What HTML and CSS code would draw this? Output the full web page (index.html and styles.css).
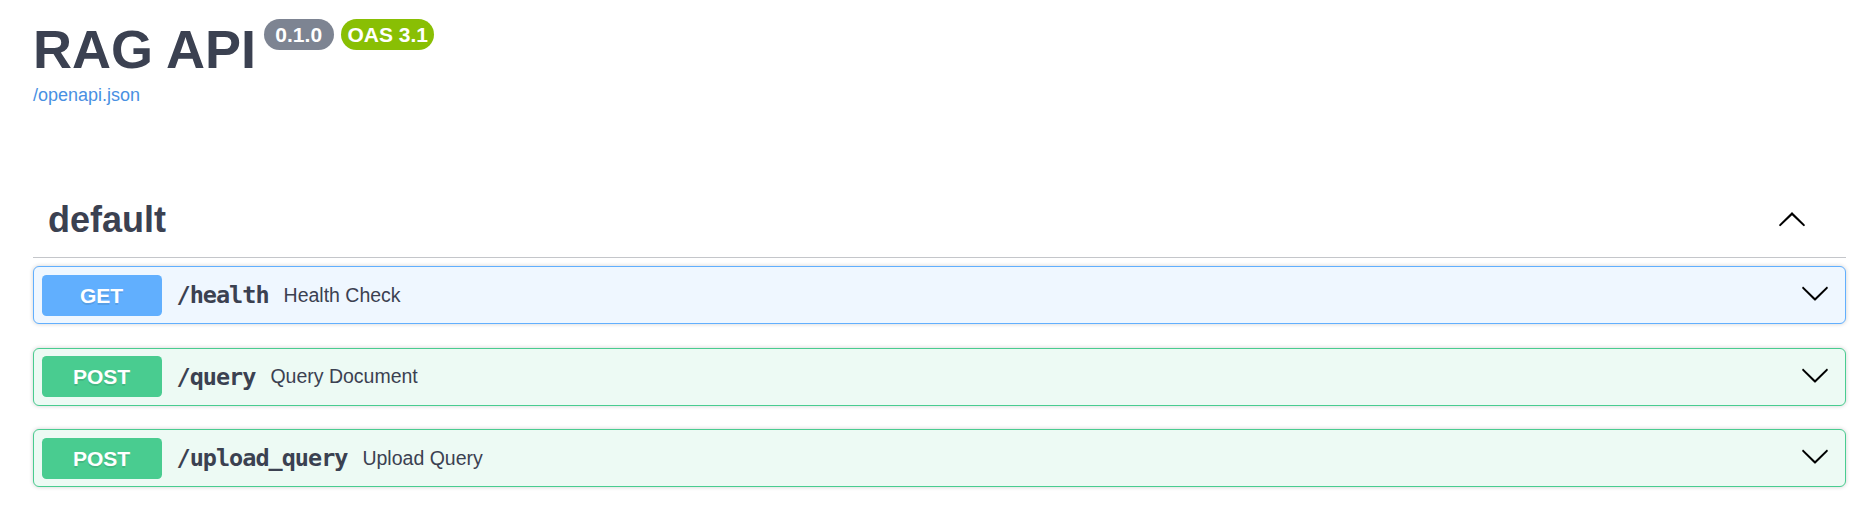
FILE: index.html
```html
<!DOCTYPE html>
<html lang="en">
<head>
<meta charset="utf-8">
<title>RAG API - Swagger UI</title>
<link rel="stylesheet" href="styles.css">
</head>
<body>
<div class="page">
  <header class="info">
    <h2 class="title"><span class="title-text">RAG API</span><small class="badge badge-version"><pre> 0.1.0 </pre></small><small class="badge badge-oas"><pre>OAS 3.1</pre></small></h2>
    <a class="url" href="#">/openapi.json</a>
  </header>

  <section class="tag-section">
    <h3 class="tag">
      <span class="tag-name">default</span>
      <svg class="arrow arrow-up" viewBox="0 0 20 20" width="30" height="30" aria-hidden="true"><path d="M17.418 6.109c.272-.268.709-.268.979 0s.271.701 0 .969l-7.908 7.83c-.27.268-.707.268-.979 0l-7.908-7.830c-.27-.268-.27-.701 0-.969.271-.268.709-.268.979 0L10 13.25l7.418-7.141z"/></svg>
    </h3>

    <div class="opblock opblock-get">
      <div class="summary">
        <span class="method">GET</span>
        <span class="path">/health</span>
        <span class="desc">Health Check</span>
        <svg class="arrow" viewBox="0 0 20 20" width="30" height="30" aria-hidden="true"><path d="M17.418 6.109c.272-.268.709-.268.979 0s.271.701 0 .969l-7.908 7.83c-.27.268-.707.268-.979 0l-7.908-7.83c-.27-.268-.27-.701 0-.969.271-.268.709-.268.979 0L10 13.25l7.418-7.141z"/></svg>
      </div>
    </div>

    <div class="opblock opblock-post">
      <div class="summary">
        <span class="method">POST</span>
        <span class="path">/query</span>
        <span class="desc">Query Document</span>
        <svg class="arrow" viewBox="0 0 20 20" width="30" height="30" aria-hidden="true"><path d="M17.418 6.109c.272-.268.709-.268.979 0s.271.701 0 .969l-7.908 7.83c-.27.268-.707.268-.979 0l-7.908-7.83c-.27-.268-.27-.701 0-.969.271-.268.709-.268.979 0L10 13.25l7.418-7.141z"/></svg>
      </div>
    </div>

    <div class="opblock opblock-post">
      <div class="summary">
        <span class="method">POST</span>
        <span class="path">/upload_query</span>
        <span class="desc">Upload Query</span>
        <svg class="arrow" viewBox="0 0 20 20" width="30" height="30" aria-hidden="true"><path d="M17.418 6.109c.272-.268.709-.268.979 0s.271.701 0 .969l-7.908 7.83c-.27.268-.707.268-.979 0l-7.908-7.83c-.27-.268-.27-.701 0-.969.271-.268.709-.268.979 0L10 13.25l7.418-7.141z"/></svg>
      </div>
    </div>
  </section>
</div>
</body>
</html>
```

FILE: styles.css
```css
* { box-sizing: border-box; }

html, body {
  margin: 0;
  padding: 0;
  background: #fff;
}

body {
  font-family: "Liberation Sans", Arial, sans-serif;
  color: #3b4151;
}

.page {
  padding: 19px 12px 0 33px;
}

/* ---------- info ---------- */
.info {
  display: flex;
  flex-direction: column;
  align-items: flex-start;
}

.title {
  display: flex;
  align-items: flex-start;
  margin: 0;
  font-size: 54px;
  line-height: 60px;
  font-weight: 700;
  color: #3b4151;
}

.badge {
  display: inline-block;
  margin-left: 7.5px;
  height: 31px;
  padding: 3px 6px;
  border-radius: 57px;
  font-size: 21px;
  line-height: 25px;
}

.badge pre {
  margin: 0;
  padding: 0;
  font-family: "Liberation Sans", Arial, sans-serif;
  font-weight: 700;
  color: #fff;
  white-space: pre;
}

.badge-version { background: #7d8492; }
.badge-oas { background: #89bf04; }

.url {
  display: block;
  margin-top: 6px;
  font-size: 18px;
  line-height: 21px;
  color: #4990e2;
  text-decoration: none;
}

/* ---------- tag ---------- */
.tag-section {
  margin-top: 76px;
}

.tag {
  display: flex;
  align-items: center;
  justify-content: space-between;
  height: 76px;
  margin: 0 0 8px;
  padding: 0 39px 0 15px;
  border-bottom: 1px solid rgba(59, 65, 81, 0.3);
  font-size: 36px;
  line-height: 41px;
  font-weight: 700;
  color: #3b4151;
}

.arrow {
  display: block;
  flex: none;
  fill: #000;
}

.arrow-up {
  transform: rotate(180deg);
}

/* ---------- operation blocks ---------- */
.opblock {
  margin-bottom: 23.5px;
  border: 1px solid #000;
  border-radius: 6px;
  box-shadow: 0 0 4.5px rgba(0, 0, 0, 0.19);
}

.opblock-get {
  background: #eff7ff;
  border-color: #61affe;
}

.opblock-get .method { background: #61affe; }

.opblock-post {
  background: #edfaf4;
  border-color: #49cc90;
}

.opblock-post .method { background: #49cc90; }

.summary {
  display: flex;
  align-items: center;
  padding: 7.5px;
}

.method {
  flex: none;
  min-width: 120px;
  height: 41px;
  border-radius: 4.5px;
  font-size: 21px;
  line-height: 41px;
  font-weight: 700;
  text-align: center;
  color: #fff;
  text-shadow: 0 1.5px 0 rgba(0, 0, 0, 0.1);
}

.path {
  flex: none;
  padding: 0 15px;
  font-family: "DejaVu Sans Mono", "Liberation Mono", monospace;
  font-size: 23.5px;
  letter-spacing: -1px;
  font-weight: 700;
  color: #3b4151;
}

.desc {
  flex: 1;
  font-size: 19.5px;
  color: #3b4151;
}

.summary .arrow {
  margin: 0 8px 4px 0;
}
```
